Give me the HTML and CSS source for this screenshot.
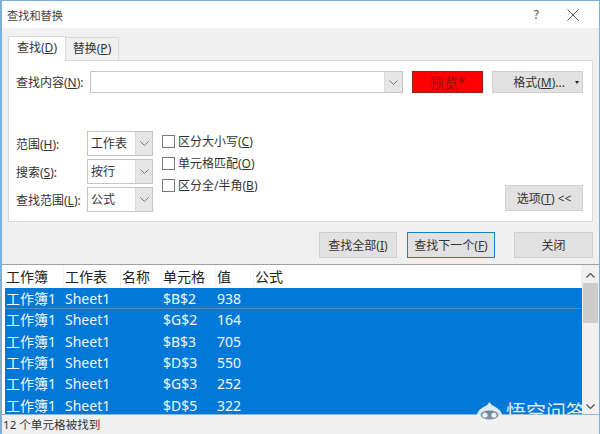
FILE: index.html
```html
<!DOCTYPE html>
<html>
	<head>
		<meta charset="UTF-8">
		<title>查找和替换</title>
		<link rel="stylesheet" href="styles.css">
	</head>
	<body>
		<div class="dialog">
			<div class="titlebar">
				<span class="title">查找和替换</span>
				<span class="help">?</span>
				<svg class="close" width="12" height="12" viewBox="0 0 12 12"><path d="M.5.5l11 11M11.5.5l-11 11" stroke="#555" fill="none"/></svg>
			</div>
			<div class="body">
				<div class="tabs">
					<span class="tab on">查找(<u>D</u>)</span>
					<span class="tab">替换(<u>P</u>)</span>
				</div>
				<div class="panel">
					<div class="find-row">
						<span class="find-label">查找内容(<u>N</u>):</span>
						<div class="combo find-combo">
							<span class="combo-text"></span>
							<span class="arrow"><svg width="9" height="5" viewBox="0 0 9 5"><path d="M.5.5l4 4 4-4" stroke="#777" fill="none"/></svg></span>
						</div>
						<div class="preview">预览*</div>
						<div class="btn format">
							<span class="format-text">格式(<u>M</u>)...</span>
							<span class="caret"></span>
						</div>
					</div>
					<div class="opts">
						<div class="selects">
							<div class="sel-row">
								<span class="sel-label">范围(<u>H</u>):</span>
								<div class="combo sel"><span class="combo-text">工作表</span><span class="arrow"><svg width="9" height="5" viewBox="0 0 9 5"><path d="M.5.5l4 4 4-4" stroke="#777" fill="none"/></svg></span></div>
							</div>
							<div class="sel-row">
								<span class="sel-label">搜索(<u>S</u>):</span>
								<div class="combo sel"><span class="combo-text">按行</span><span class="arrow"><svg width="9" height="5" viewBox="0 0 9 5"><path d="M.5.5l4 4 4-4" stroke="#777" fill="none"/></svg></span></div>
							</div>
							<div class="sel-row">
								<span class="sel-label">查找范围(<u>L</u>):</span>
								<div class="combo sel"><span class="combo-text">公式</span><span class="arrow"><svg width="9" height="5" viewBox="0 0 9 5"><path d="M.5.5l4 4 4-4" stroke="#777" fill="none"/></svg></span></div>
							</div>
						</div>
						<div class="checks">
							<div class="check"><span class="box"></span>区分大小写(<u>C</u>)</div>
							<div class="check"><span class="box"></span>单元格匹配(<u>O</u>)</div>
							<div class="check"><span class="box"></span>区分全/半角(<u>B</u>)</div>
						</div>
						<div class="btn options">选项(<u>T</u>) &lt;&lt;</div>
					</div>
				</div>
				<div class="actions">
					<div class="btn act all">查找全部(<u>I</u>)</div>
					<div class="btn act next">查找下一个(<u>F</u>)</div>
					<div class="btn act shut">关闭</div>
				</div>
			</div>
			<div class="results">
				<div class="list">
					<div class="row head">
						<span class="c1">工作簿</span><span class="c2">工作表</span><span class="c3">名称</span><span class="c4">单元格</span><span class="c5">值</span><span class="c6">公式</span>
					</div>
					<div class="rows">
						<div class="row first"><span class="c1">工作簿1</span><span class="c2">Sheet1</span><span class="c3"></span><span class="c4">$B$2</span><span class="c5">938</span></div>
						<div class="row"><span class="c1">工作簿1</span><span class="c2">Sheet1</span><span class="c3"></span><span class="c4">$G$2</span><span class="c5">164</span></div>
						<div class="row"><span class="c1">工作簿1</span><span class="c2">Sheet1</span><span class="c3"></span><span class="c4">$B$3</span><span class="c5">705</span></div>
						<div class="row"><span class="c1">工作簿1</span><span class="c2">Sheet1</span><span class="c3"></span><span class="c4">$D$3</span><span class="c5">550</span></div>
						<div class="row"><span class="c1">工作簿1</span><span class="c2">Sheet1</span><span class="c3"></span><span class="c4">$G$3</span><span class="c5">252</span></div>
						<div class="row"><span class="c1">工作簿1</span><span class="c2">Sheet1</span><span class="c3"></span><span class="c4">$D$5</span><span class="c5">322</span></div>
					</div>
				</div>
				<div class="scrollbar">
					<svg class="sb-up" width="9" height="5" viewBox="0 0 9 5"><path d="M.5 4.500l4-4 4 4" stroke="#555" stroke-width="1.3" fill="none"/></svg>
					<div class="thumb"></div>
					<svg class="sb-down" width="9" height="5" viewBox="0 0 9 5"><path d="M.5.5l4 4 4-4" stroke="#555" stroke-width="1.3" fill="none"/></svg>
				</div>
			</div>
			<div class="status">12 个单元格被找到</div>
			<div class="watermark">
				<svg width="25" height="22" viewBox="0 0 25 22"><path d="M12.500 0c1 2 2.500 3 5 4.500 4 2 7.500 5 7.500 9 0 5-6 8.500-12.500 8.500S0 18.500 0 13.500c0-4 3.500-7 7.500-9 2.500-1.500 4-2.500 5-4.500z" fill="#f2f4f6"/><ellipse cx="12.500" cy="13" rx="9" ry="4.500" fill="#7a8a9a"/><circle cx="8" cy="13" r="2.600" fill="#f2f4f6"/><circle cx="17" cy="13" r="2.600" fill="#f2f4f6"/></svg>
				<span>悟空问答</span>
			</div>
		</div>
	</body>
</html>
```

FILE: styles.css
```css
html, body {
    margin: 0;
    padding: 0;
}
body {
    width: 600px;
    height: 434px;
    overflow: hidden;
    font-family: "Noto Sans", "Noto Sans CJK SC", sans-serif;
    font-size: 12px;
    color: #333;
}
u {
    text-decoration: underline;
}
.dialog {
    position: relative;
    box-sizing: border-box;
    width: 600px;
    height: 434px;
    border: 1px solid #7fb0d4;
    border-left-width: 2px;
    background: #f0f0f0;
    display: flex;
    flex-direction: column;
}
.titlebar {
    height: 27px;
    background: #fff;
    display: flex;
    align-items: center;
    padding-left: 5px;
    padding-right: 20px;
    flex: none;
}
.title {
    flex: 1;
    font-size: 11.2px;
    color: #444;
}
.help {
    margin-right: 28px;
    color: #555;
}
.body {
    flex: none;
    height: 236px;
    padding: 8px 6px 0 6px;
    box-sizing: border-box;
}
.tabs {
    display: flex;
    height: 24px;
    align-items: flex-end;
}
.tab {
    height: 23px;
    line-height: 22px;
    width: 53px;
    box-sizing: border-box;
    text-align: center;
    border: 1px solid #d9d9d9;
    border-bottom: 0;
    border-left: 0;
}
.tab.on {
    height: 25px;
    margin-bottom: -1px;
    width: 58px;
    background: #fff;
    border-left: 1px solid #d9d9d9;
    position: relative;
    z-index: 1;
}
.panel {
    height: 162px;
    width: 585px;
    box-sizing: border-box;
    background: #fff;
    border: 1px solid #d9d9d9;
    padding: 10px 8px 0 7px;
}
.find-row {
    display: flex;
    align-items: center;
    height: 22px;
}
.find-label {
    width: 74px;
}
.combo {
    display: flex;
    box-sizing: border-box;
    border: 1px solid #c4c4c4;
    background: #fff;
}
.combo-text {
    flex: 1;
    padding-left: 3px;
}
.arrow {
    width: 17px;
    background: #e6e6e6;
    border-left: 1px solid #dcdcdc;
    display: flex;
    align-items: center;
    justify-content: center;
}
.find-combo {
    width: 313px;
    height: 22px;
    margin-right: 9px;
}
.preview {
    width: 71px;
    height: 22px;
    line-height: 21px;
    box-sizing: border-box;
    background: #ff0000;
    border: 1px solid #a02020;
    text-align: center;
    color: #8c1010;
    font-size: 14px;
    margin-right: 9px;
}
.btn {
    box-sizing: border-box;
    background: #e1e1e1;
    border: 1px solid #cfcfcf;
    text-align: center;
}
.format {
    width: 91px;
    height: 22px;
    line-height: 21px;
    display: flex;
    align-items: center;
    padding-right: 3px;
}
.format-text {
    flex: 1;
    padding-left: 10px;
}
.caret {
    width: 0;
    height: 0;
    border-left: 2px solid transparent;
    border-right: 2px solid transparent;
    border-top: 3px solid #222;
}
.opts {
    display: flex;
    margin-top: 38px;
}
.selects {
    width: 146px;
    display: flex;
    flex-direction: column;
    gap: 3px;
}
.sel-row {
    display: flex;
    align-items: center;
    height: 25px;
}
.sel-label {
    width: 71px;
    white-space: nowrap;
}
.sel {
    width: 66px;
    height: 25px;
    line-height: 23px;
}
.sel .arrow {
    width: 16px;
}
.checks {
    width: 343px;
    display: flex;
    flex-direction: column;
    gap: 4px;
    padding-top: 1px;
}
.check {
    display: flex;
    align-items: center;
    height: 18px;
    white-space: pre;
}
.box {
    box-sizing: border-box;
    width: 13px;
    height: 13px;
    border: 1px solid #777;
    margin-right: 3px;
}
.options {
    width: 78px;
    height: 26px;
    line-height: 25px;
    margin-top: 54px;
}
.actions {
    display: flex;
    padding-top: 10px;
    padding-left: 311px;
}
.act {
    height: 26px;
    line-height: 25px;
}
.all {
    width: 78px;
    margin-right: 10px;
}
.next {
    width: 88px;
    margin-right: 19px;
    border: 1px solid #1a7fc4;
}
.shut {
    width: 79px;
}
.results {
    flex: none;
    height: 149px;
    background: #fff;
    border-top: 1px solid #a0a0a0;
    display: flex;
    overflow: hidden;
}
.list {
    flex: 1;
    padding-left: 3px;
    min-width: 0;
}
.row {
    display: flex;
    height: 21.33px;
    line-height: 22px;
    font-size: 14px;
    white-space: nowrap;
}
.row span {
    box-sizing: border-box;
    padding-left: 1px;
}
.head {
    height: 23px;
    color: #222;
    line-height: 24px;
}
.head span {
    border-right: 1px solid #f0f0f0;
}
.rows {
    height: 126px;
    overflow: hidden;
    background: #0078d7;
    color: #f2f8fd;
}
.first {
    border-bottom: 1px solid #4a8cc4;
    box-sizing: border-box;
}
.c1 { width: 59px; }
.c2 { width: 57px; }
.c3 { width: 41px; }
.c4 { width: 54px; }
.c5 { width: 38px; }
.c6 { flex: 1; }
.scrollbar {
    width: 17px;
    flex: none;
    background: #f0f0f0;
    position: relative;
    display: flex;
    flex-direction: column;
    align-items: center;
}
.sb-up {
    margin-top: 8px;
}
.thumb {
    width: 15px;
    height: 40px;
    background: #cdcdcd;
    margin-top: 5px;
}
.sb-down {
    margin-top: auto;
    margin-bottom: 5px;
}
.status {
    flex: 1;
    background: #f0f0f0;
    border-top: 1px solid #8fb8d8;
    line-height: 19px;
    padding-left: 1px;
    font-size: 11.6px;
}
.watermark {
    position: absolute;
    right: 13px;
    bottom: 8px;
    display: flex;
    align-items: center;
    gap: 4px;
    color: #f2f4f6;
    font-size: 20px;
    line-height: 24px;
    opacity: .92;
}
```
